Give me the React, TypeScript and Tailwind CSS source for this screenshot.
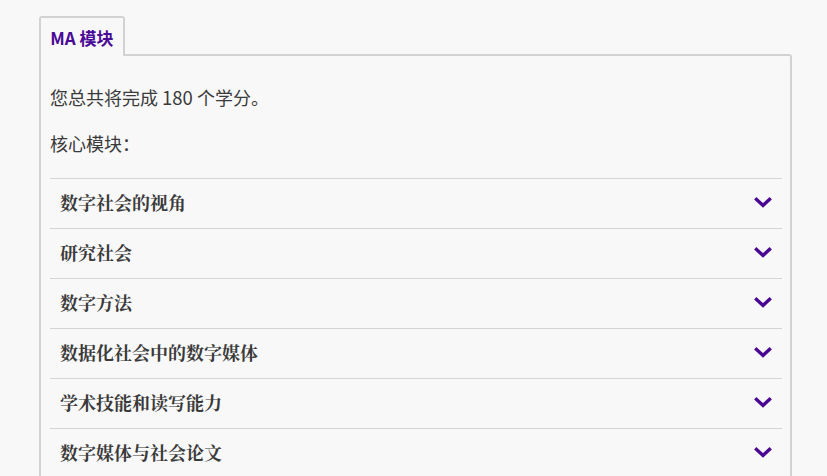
import React from "react";

const items = [
  "数字社会的视角",
  "研究社会",
  "数字方法",
  "数据化社会中的数字媒体",
  "学术技能和读写能力",
  "数字媒体与社会论文",
];

function Chevron() {
  return (
    <svg width="18" height="12" viewBox="0 0 18 12" aria-hidden="true">
      <path d="M2.5 2.5 L9 8.5 L15.5 2.5" fill="none" stroke="#4a0892" strokeWidth="3.4" strokeLinecap="square" />
    </svg>
  );
}

export default function App() {
  return (
    <div
      className="min-h-screen bg-[#f8f8f8] pl-[39px] pt-[16px] text-[#3a3a3a]"
      style={{ fontFamily: '"Noto Sans CJK SC", "Noto Sans", sans-serif' }}
    >
      <div className="w-[753px]">
        <div className="relative z-10 -mb-[2px] flex h-[40px] w-[86px] items-center justify-center rounded-t-[3px] border-2 border-b-0 border-[#d2d2d2] bg-[#f8f8f8] pt-[1px]">
          <span className="text-[17px] font-bold text-[#4b0a96]">MA 模块</span>
        </div>
        <div className="h-[430px] rounded-tr-[3px] border-2 border-[#d2d2d2] pl-[9px] pr-[8px] pt-[28px]">
          <p className="text-[18px] leading-[26px]">
            您总共将完成 <span className="text-[18.5px]">180</span> 个学分。
          </p>
          <p className="mt-[20px] text-[18px] leading-[26px]">核心模块：</p>
          <div className="mt-[22px]">
            {items.map((t) => (
              <div
                key={t}
                className="flex h-[50px] items-center justify-between border-t border-[#d4d4d4] pb-[2px] pl-[10px] pr-[10px]"
              >
                <span
                  className="text-[18px] font-bold text-[#3a3a3a]"
                  style={{ fontFamily: '"Noto Serif CJK SC", "Noto Sans CJK SC", serif' }}
                >
                  {t}
                </span>
                <Chevron />
              </div>
            ))}
          </div>
        </div>
      </div>
    </div>
  );
}
